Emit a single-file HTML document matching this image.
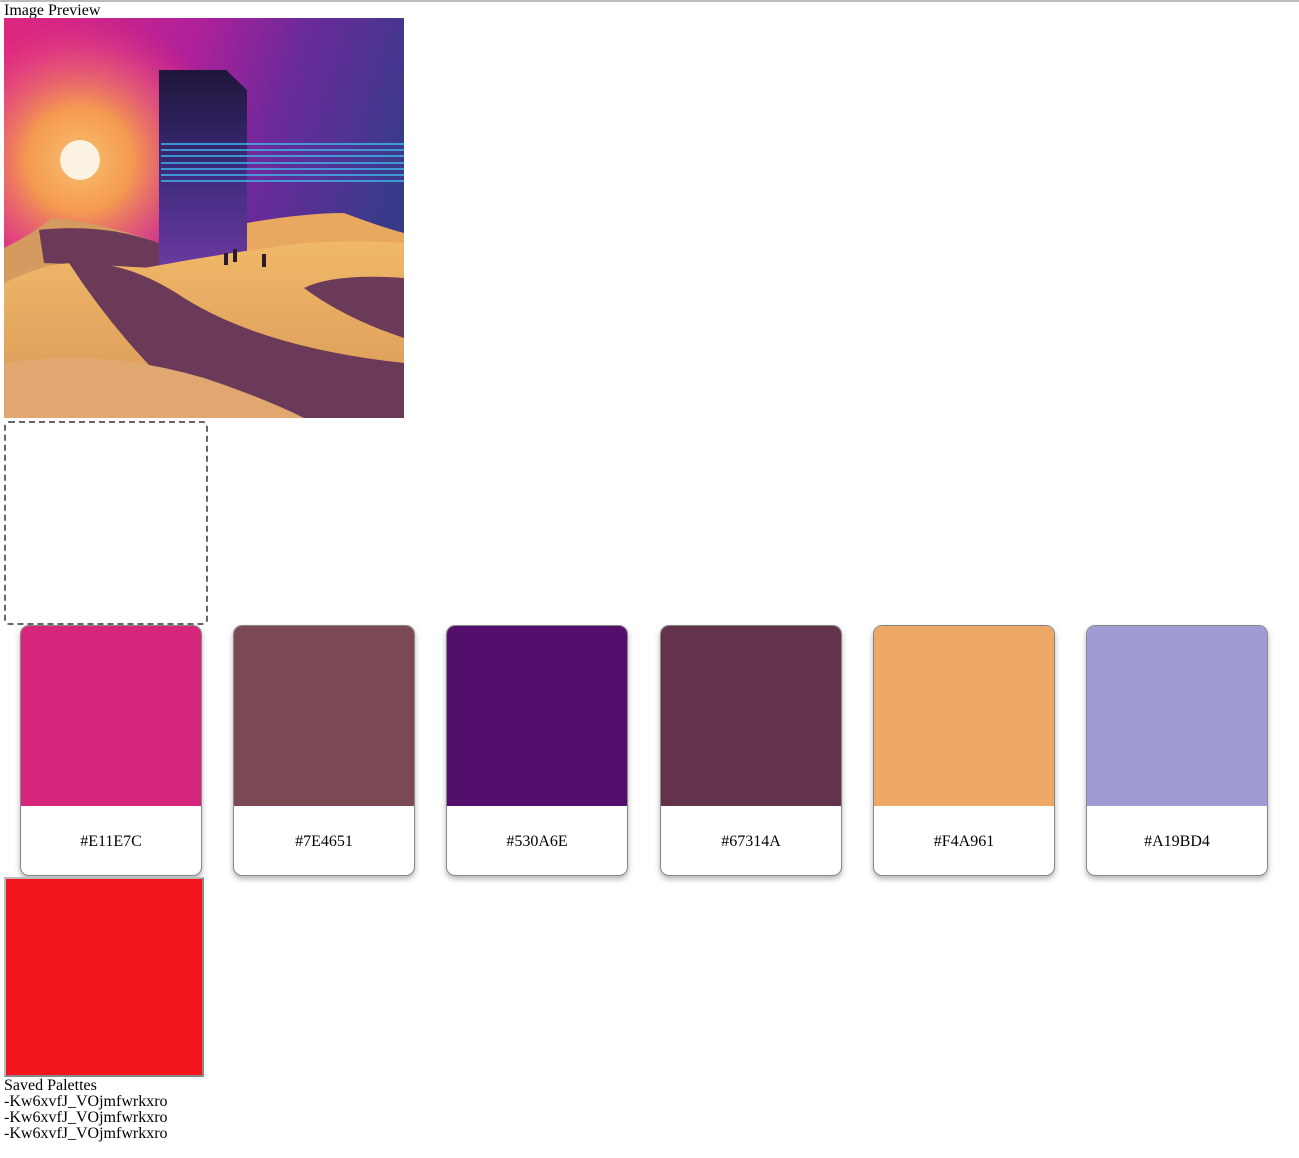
<!DOCTYPE html>
<html><head><meta charset="utf-8"><style>
body{margin:0;font-family:"Liberation Serif",serif;font-size:16px;color:#000;background:#fff;}
hr{position:absolute;top:0;left:0;width:1299px;margin:0;border:0;border-top:2px solid #bbb;}
.t{position:absolute;left:4px;line-height:16px;}
.card{position:absolute;top:625px;width:180px;height:249px;border:1px solid #888;border-radius:9px;overflow:hidden;background:#fff;box-shadow:0 3px 6px rgba(0,0,0,.3);}
.card .c{height:180px;}
.card .l{text-align:center;margin-top:27px;font-size:16px;}
</style></head><body>
<hr>
<div class="t" style="top:3px">Image Preview</div>
<svg style="position:absolute;left:4px;top:18px" width="400" height="400" viewBox="0 0 400 400">
<defs>
<linearGradient id="sky" x1="0" y1="0" x2="1" y2="0.3"><stop offset="0" stop-color="#e0267e"/><stop offset=".45" stop-color="#b0209a"/><stop offset=".7" stop-color="#6a2a9a"/><stop offset="1" stop-color="#3a3a8a"/></linearGradient>
<radialGradient id="glow" cx="76" cy="142" r="150" gradientUnits="userSpaceOnUse"><stop offset="0" stop-color="#f9c070"/><stop offset=".35" stop-color="#f49a50"/><stop offset=".7" stop-color="#e8507a" stop-opacity=".7"/><stop offset="1" stop-color="#e0267e" stop-opacity="0"/></radialGradient>
<linearGradient id="mono" x1="0" y1="0" x2="0" y2="1"><stop offset="0" stop-color="#20163a"/><stop offset=".5" stop-color="#3a2a7a"/><stop offset="1" stop-color="#6a3aa0"/></linearGradient>
<linearGradient id="sand" x1="0" y1="0" x2="0" y2="1"><stop offset="0" stop-color="#f0b868"/><stop offset="1" stop-color="#d89858"/></linearGradient>
</defs>
<rect width="400" height="400" fill="url(#sky)"/>
<rect width="400" height="400" fill="url(#glow)"/>
<circle cx="76" cy="142" r="20" fill="#fbf2e2"/>
<polygon points="155,52 222,52 243,72 243,248 155,248" fill="url(#mono)"/>
<g stroke="#40b8f0" stroke-width="1.5"><line x1="157" y1="126" x2="400" y2="126"/><line x1="157" y1="132" x2="400" y2="132"/><line x1="157" y1="138" x2="400" y2="138"/><line x1="157" y1="145" x2="400" y2="145"/><line x1="157" y1="151" x2="400" y2="151"/><line x1="157" y1="157" x2="400" y2="157"/><line x1="157" y1="163" x2="400" y2="163"/></g>
<path d="M0,230 Q30,215 48,200 Q100,205 155,225 L155,250 L0,290Z" fill="#d49a60"/>
<path d="M35,212 Q100,205 155,225 L155,250 L40,245Z" fill="#6a3a58"/>
<path d="M243,205 Q300,195 340,195 Q380,210 400,215 L400,270 L243,260Z" fill="#e8a860"/>
<path d="M0,265 Q40,245 70,245 L140,250 Q220,235 300,225 Q360,222 400,225 L400,400 L0,400Z" fill="url(#sand)"/>
<path d="M65,245 Q120,240 180,280 Q260,330 400,345 L400,400 L200,400 Q120,330 65,245Z" fill="#6a3a58"/>
<path d="M300,270 Q330,255 400,260 L400,320 Q340,300 300,270Z" fill="#6a3a58"/>
<path d="M0,345 Q100,330 200,360 Q260,380 300,400 L0,400Z" fill="#e0a870"/>
<g fill="#2a1a30"><rect x="220" y="235" width="4" height="12"/><rect x="229" y="231" width="4" height="13"/><rect x="258" y="236" width="4" height="13"/></g>
</svg>
<div style="position:absolute;left:4px;top:421px;width:200px;height:200px;border:2px dashed #666;border-radius:5px"></div>
<div class="card" style="left:20px"><div class="c" style="background:#d6267c"></div><div class="l">#E11E7C</div></div>
<div class="card" style="left:233px"><div class="c" style="background:#7c4a55"></div><div class="l">#7E4651</div></div>
<div class="card" style="left:446px"><div class="c" style="background:#520f6c"></div><div class="l">#530A6E</div></div>
<div class="card" style="left:660px"><div class="c" style="background:#63334c"></div><div class="l">#67314A</div></div>
<div class="card" style="left:873px"><div class="c" style="background:#eea866"></div><div class="l">#F4A961</div></div>
<div class="card" style="left:1086px"><div class="c" style="background:#a19bd3"></div><div class="l">#A19BD4</div></div>
<div style="position:absolute;left:4px;top:877px;width:196px;height:196px;background:#f4141e;border:2px solid;border-color:#bbb #888 #888 #bbb"></div>
<div class="t" style="top:1078px">Saved Palettes</div>
<div class="t" style="top:1094px">-Kw6xvfJ_VOjmfwrkxro</div>
<div class="t" style="top:1110px">-Kw6xvfJ_VOjmfwrkxro</div>
<div class="t" style="top:1126px">-Kw6xvfJ_VOjmfwrkxro</div>
</body></html>
